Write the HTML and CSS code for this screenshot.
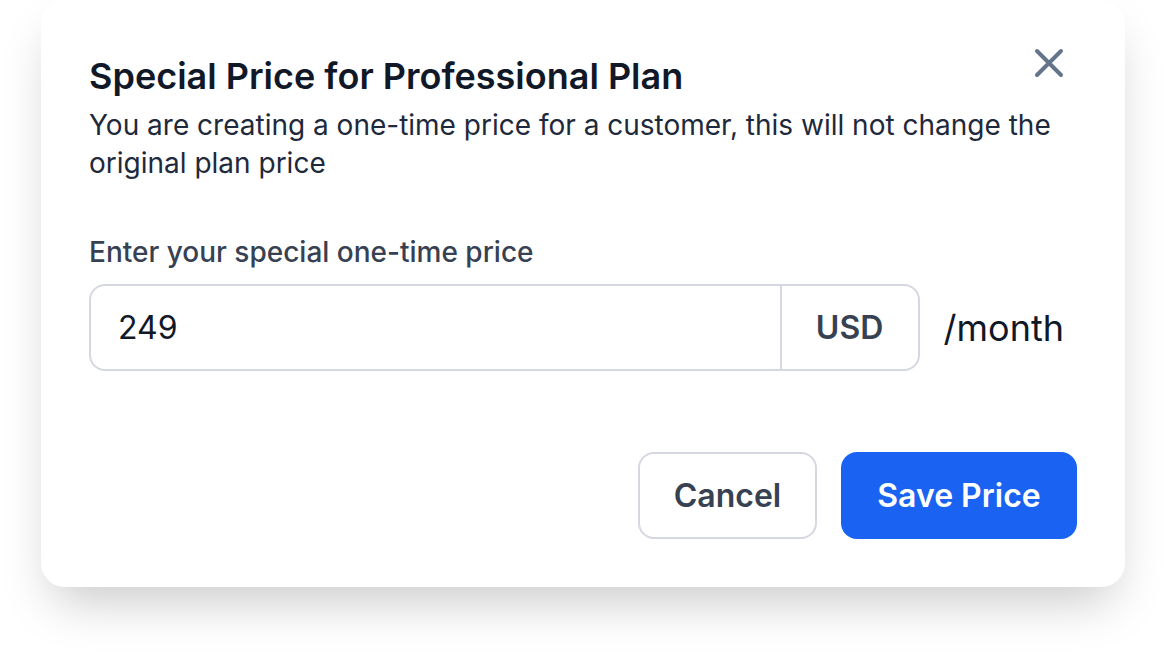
FILE: index.html
```html
<!DOCTYPE html>
<html lang="en">
<head>
<meta charset="utf-8">
<title>Special Price</title>
<link rel="stylesheet" href="styles.css">
</head>
<body>
  <div class="modal">
    <div class="modal-header">
      <h2 class="modal-title">Special Price for Professional Plan</h2>
      <button class="close-btn" type="button" aria-label="Close">
        <svg width="48" height="48" viewBox="0 0 24 24" fill="none" stroke="#64748b" stroke-width="2" stroke-linecap="round" stroke-linejoin="round">
          <path d="M6 18L18 6M6 6l12 12"/>
        </svg>
      </button>
    </div>
    <p class="modal-desc">You are creating a one-time price for a customer, this will not change the original plan price</p>

    <label class="field-label">Enter your special one-time price</label>
    <div class="price-row">
      <div class="input-group">
        <div class="input-value">249</div>
        <div class="input-addon">USD</div>
      </div>
      <span class="per-month">/month</span>
    </div>

    <div class="actions">
      <button class="btn btn-secondary" type="button">Cancel</button>
      <button class="btn btn-primary" type="button">Save Price</button>
    </div>
  </div>
</body>
</html>
```

FILE: styles.css
```css
* { box-sizing: border-box; }

html, body {
  margin: 0;
  padding: 0;
  background: #ffffff;
}

body {
  min-height: 668px;
  font-family: Inter, "Noto Sans", sans-serif;
  padding: 0 0 0 41px;
}

.modal {
  width: 1084px;
  background: #ffffff;
  border-radius: 24px;
  padding: 48px;
  box-shadow: 0 25px 50px -12px rgba(0, 0, 0, 0.22);
}

.modal-header {
  display: flex;
  justify-content: space-between;
  align-items: flex-start;
}

.modal-title {
  margin: 0;
  font-size: 36px;
  line-height: 56px;
  font-weight: 600;
  color: #111827;
}

.close-btn {
  width: 48px;
  height: 48px;
  margin: -9px 4px 0 0;
  padding: 0;
  border: 0;
  background: transparent;
  display: flex;
  align-items: center;
  justify-content: center;
}

.close-btn svg { display: block; }

.modal-desc {
  margin: 2px 0 0 0;
  font-size: 28px;
  line-height: 38px;
  color: #1e293b;
}

.field-label {
  display: block;
  margin-top: 50px;
  font-size: 28px;
  line-height: 40px;
  font-weight: 500;
  color: #374151;
}

.price-row {
  margin-top: 12px;
  display: flex;
  align-items: center;
  gap: 24px;
}

.input-group {
  flex: 1;
  display: flex;
  height: 87px;
  border: 2px solid #d5d8e1;
  border-radius: 16px;
  overflow: hidden;
}

.input-value {
  flex: 1;
  display: flex;
  align-items: center;
  padding-left: 27px;
  font-size: 32px;
  color: #111827;
}

.input-addon {
  width: 138px;
  border-left: 2px solid #d5d8e1;
  display: flex;
  align-items: center;
  justify-content: center;
  font-size: 32px;
  font-weight: 600;
  color: #374151;
}

.per-month {
  font-size: 36px;
  color: #111827;
  margin-right: 13px;
}

.actions {
  margin-top: 81px;
  display: flex;
  justify-content: flex-end;
  gap: 24px;
}

.btn {
  height: 87px;
  padding: 0;
  border-radius: 16px;
  border: 2px solid transparent;
  font-family: Inter, "Noto Sans", sans-serif;
  font-size: 32px;
  font-weight: 600;
  cursor: pointer;
}

.btn-secondary {
  width: 179px;
  background: #ffffff;
  border-color: #d5d8e1;
  color: #374151;
}

.btn-primary {
  width: 236px;
  background: #1a62f2;
  color: #ffffff;
}
```
